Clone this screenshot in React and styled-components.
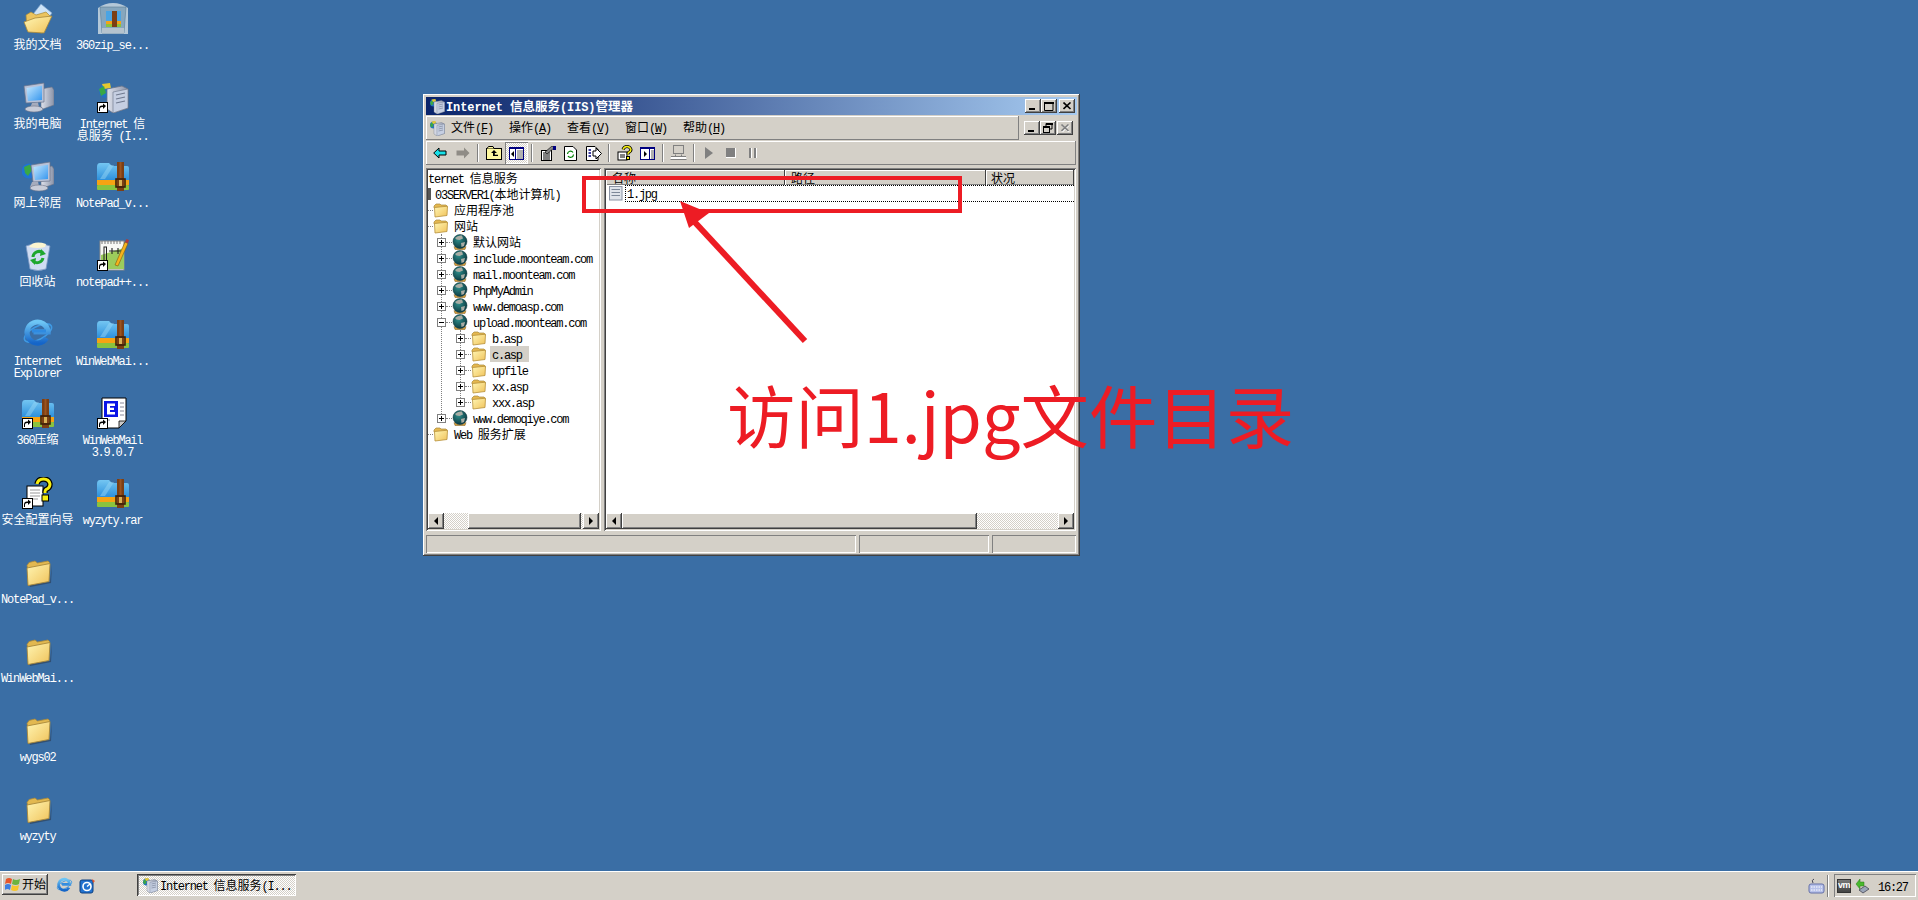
import React from 'react';
import styled, { createGlobalStyle } from 'styled-components';

const Global = createGlobalStyle`
  html, body { margin: 0; padding: 0; height: 100%; overflow: hidden; }
  body { font-family: "Noto Sans CJK SC", "Liberation Sans", sans-serif; font-size: 12px; color: #000; }
`;

const FACE = '#d4d0c8';
const dither = `repeating-conic-gradient(${FACE} 0 25%, #fff 0 50%) 0 0 / 2px 2px`;
const raised = `box-shadow: inset -1px -1px #404040, inset 1px 1px #fff, inset -2px -2px #808080, inset 2px 2px ${FACE};`;
const sunken = `box-shadow: inset 1px 1px #808080, inset -1px -1px #fff, inset 2px 2px #404040, inset -2px -2px ${FACE};`;

const Page = styled.div`display: flex; flex-direction: column; width: 100%; height: 100vh; background: #3a6ea5; overflow: hidden;`;
const Desktop = styled.main`position: relative; flex: 1; min-height: 0;`;
const IconGrid = styled.div`
  display: grid; grid-auto-flow: column;
  grid-template-columns: 75px 75px; grid-template-rows: repeat(11, 79.1px); width: 150px;
`;
const DeskItem = styled.div`display: flex; flex-direction: column; align-items: center; padding-top: 2px; color: #fff; text-align: center;`;
const DeskIconBox = styled.div`position: relative; width: 32px; height: 32px; margin-bottom: 4px;`;
const DeskLabel = styled.div`width: 75px; white-space: pre-line; line-height: 12px;`;
const Shortcut = styled.svg`position: absolute; left: 0; bottom: 0; width: 11px; height: 11px;`;

const Lat = styled.span`font-family: "Liberation Mono", monospace; font-size: 12px; line-height: 0; letter-spacing: ${p => p.$sp ?? '-1.25px'};`;
const Cjk = styled.span`font-family: "Noto Sans CJK SC", sans-serif; font-size: 12px; line-height: 0;`;
const T = ({ children, sp }) => (
  <>
    {String(children).split(/([\u4e00-\u9fff]+)/).filter(Boolean).map((s, i) =>
      /[\u4e00-\u9fff]/.test(s) ? <Cjk key={i}>{s}</Cjk> : <Lat key={i} $sp={sp}>{s}</Lat>)}
  </>
);

const Win = styled.section`
  position: absolute; left: 423px; top: 94px; width: 657px; height: 462px; box-sizing: border-box;
  background: ${FACE}; padding: 3px; display: flex; flex-direction: column; ${raised}
`;
const TitleBar = styled.header`
  height: 18px; flex: none; display: flex; align-items: center; padding: 0 2px 0 3px;
  background: linear-gradient(90deg, #0a246a, #a6caf0);
`;
const TitleText = styled.div`flex: 1; margin-left: 1px; color: #fff; font-weight: 700; white-space: nowrap; line-height: 18px;`;
const TitleLat = styled.span`font-family: "Liberation Mono", monospace; font-size: 12px; line-height: 0; font-weight: 700; letter-spacing: -0.1px;`;
const TitleCjk = styled.span`font-size: 12.5px; line-height: 0; font-weight: 700;`;
const WinBtn = styled.button`
  width: 16px; height: 14px; padding: 0; border: 0; background: ${FACE}; margin-left: ${p => p.$gap || 0}px;
  display: flex; align-items: center; justify-content: center; box-shadow: inset -1px -1px #404040, inset 1px 1px #fff, inset -2px -2px #808080;
`;
const MenuRow = styled.div`display: flex; height: 24px; margin-top: 1px; flex: none;`;
const MenuBand = styled.nav`
  width: 593px; height: 24px; box-sizing: border-box; display: flex; align-items: center; padding: 0 0 2px 3px;
  box-shadow: inset -1px -1px #808080, inset 1px 1px #fff, inset 0 -1px #808080;
`;
const MenuIcon = styled.div`width: 16px; height: 16px; margin: 2px 6px 0 0;`;
const MenuItem = styled.div`width: 58px; white-space: nowrap; line-height: 16px;`;
const ChildBtns = styled.div`display: flex; align-items: center; padding: 0 0 0 5px;`;
const Toolbar = styled.div`
  height: 24px; margin: 1px 1px 0 0; flex: none; display: flex; align-items: center; padding-left: 2px; box-sizing: border-box;
  box-shadow: inset -1px -1px #808080, inset 1px 1px #fff;
`;
const ToolBtn = styled.div`
  width: ${p => p.$w || 23}px; height: 22px; display: flex; align-items: center; justify-content: center; flex: none;
  ${p => p.$pressed && `background: ${dither}; box-shadow: inset 1px 1px #808080, inset -1px -1px #fff;`}
`;
const ToolSep = styled.div`width: 2px; height: 18px; margin: 0 3px; background: linear-gradient(90deg, #808080 50%, #fff 50%); flex: none;`;

const Panes = styled.div`display: flex; height: 363px; margin-top: 3px; flex: none; gap: 3px;`;
const Pane = styled.div`
  width: ${p => p.$w}px; box-sizing: border-box; padding: 2px; background: #fff; display: flex; flex-direction: column; ${sunken}
`;
const Tree = styled.div`flex: 1; min-height: 0; overflow: hidden; background: #fff; white-space: nowrap;`;
const Branch = styled.div`
  position: relative;
  &::before {
    content: ''; position: absolute; left: ${p => p.$x}px; top: 0; bottom: 8px; border-left: 1px dotted #808080;
  }
`;
const Row = styled.div`position: relative; display: flex; align-items: center; height: 16px; padding-left: ${p => p.$pad || 0}px;`;
const Expander = styled.div`
  position: relative; width: 9px; height: 9px; box-sizing: border-box; border: 1px solid #808080; background: #fff; flex: none;
  &::before { content: ''; position: absolute; left: 1px; right: 1px; top: 3px; height: 1px; background: #000; }
  &::after { content: ''; display: ${p => p.$open ? 'none' : 'block'}; position: absolute; top: 1px; bottom: 1px; left: 3px; width: 1px; background: #000; }
`;
const Conn = styled.div`width: ${p => p.$w}px; flex: none; border-top: 1px dotted #808080;`;
const Node = styled.div`width: 16px; height: 16px; flex: none; margin-right: 5px;`;
const Name = styled.div`height: 16px; line-height: 15px; padding-right: 3px; ${p => p.$sel && `background: ${FACE}; margin-left: -2px; padding: 0 7px 0 2px;`}`;
const Sliver = styled.div`width: 3px; height: 12px; background: #555; margin-right: 4px;`;

const HScroll = styled.div`display: flex; height: 16px; flex: none; background: ${dither};`;
const ScrollBtn = styled.div`
  width: 16px; height: 16px; flex: none; background: ${FACE}; display: flex; align-items: center; justify-content: center;
  box-shadow: inset -1px -1px #404040, inset 1px 1px #fff, inset -2px -2px #808080;
`;
const Thumb = styled.div`
  width: ${p => p.$w}px; margin-left: ${p => p.$lead}px; height: 16px; background: ${FACE};
  box-shadow: inset -1px -1px #404040, inset 1px 1px #fff, inset -2px -2px #808080;
`;
const Spacer = styled.div`flex: 1;`;
const Arrow = styled.div`
  width: 0; height: 0; border-top: 4px solid transparent; border-bottom: 4px solid transparent;
  ${p => p.$dir === 'l' ? 'border-right: 4px solid #000;' : 'border-left: 4px solid #000;'}
`;

const ListArea = styled.div`flex: 1; min-height: 0; background: #fff;`;
const ListHead = styled.div`display: flex; height: 16px;`;
const HeadCell = styled.div`
  width: ${p => p.$w}px; flex: ${p => p.$w ? 'none' : 1}; box-sizing: border-box; height: 15px; line-height: 15px; padding-left: ${p => p.$pl}px;
  background: ${FACE}; box-shadow: inset -1px 0 #404040, inset 0 1px #fff, inset 1px 0 #fff, inset 0 -1px #808080;
`;
const ListRow = styled.div`display: flex; align-items: stretch; height: 17px; padding-left: 3px; margin-top: -1px;`;
const FileIcon = styled.div`width: 14px; height: 16px; margin-right: 2px; flex: none;`;
const FileName = styled.div`flex: 1; box-sizing: border-box; border: 1px dotted #000; border-right: 0; padding-left: 1px; line-height: 14px;`;

const StatusBar = styled.footer`display: flex; gap: 3px; margin-top: 4px; height: 18px; padding-right: 1px; flex: none;`;
const StatusCell = styled.div`width: ${p => p.$w}px; box-shadow: inset 1px 1px #808080, inset -1px -1px #fff;`;

const RedBox = styled.div`position: absolute; left: 582px; top: 176px; width: 380px; height: 37px; box-sizing: border-box; border: 4px solid #ed1c24;`;
const ArrowSvg = styled.svg`position: absolute; left: 670px; top: 190px; width: 150px; height: 160px; pointer-events: none;`;
const Note = styled.div`
  position: absolute; left: 727px; top: 367px; color: #ed1c24; font-size: 68.4px; line-height: 94px; white-space: nowrap;
  font-family: "Noto Sans CJK SC", sans-serif; font-weight: 400;
`;

const Taskbar = styled.footer`
  height: 29px; flex: none; display: flex; align-items: flex-start; background: ${FACE}; box-shadow: inset 0 1px #fff; padding: 3px 2px 0 2px; box-sizing: border-box;
`;
const StartBtn = styled.button`
  width: 46px; height: 21px; border: 0; padding: 0 0 2px 3px; background: ${FACE}; display: flex; align-items: center; gap: 1px; font: inherit; color: #000; line-height: 17px;
  box-shadow: inset -1px -1px #404040, inset 1px 1px #fff, inset -2px -2px #808080;
`;
const Quick = styled.div`display: flex; align-items: center; gap: 6px; margin: 3px 0 0 8px; width: 81px;`;
const TaskBtn = styled.div`
  width: 159px; height: 22px; box-sizing: border-box; display: flex; align-items: center; gap: 2px; padding-left: 5px; background: ${dither}; white-space: nowrap; line-height: 16px;
  box-shadow: inset 1px 1px #404040, inset -1px -1px #fff, inset 2px 2px #808080;
`;
const TrayWrap = styled.div`margin-left: auto; display: flex; align-items: center; line-height: 16px;`;
const TraySep = styled.div`width: 2px; height: 22px; margin: 0 5px 0 2px; background: linear-gradient(90deg, #808080 50%, #fff 50%);`;
const Tray = styled.div`
  width: 82px; height: 23px; box-sizing: border-box; display: flex; align-items: center; padding-left: 3px; gap: 4px;
  box-shadow: inset 1px 1px #808080, inset -1px -1px #fff;
`;
const Clock = styled.div`margin-left: 5px;`;
const VmBadge = styled.div`
  width: 14px; height: 14px; background: linear-gradient(#777, #444); color: #fff; border: 1px solid #333; box-sizing: border-box;
  display: flex; align-items: center; justify-content: center; font: 700 9px/1 "Liberation Sans", sans-serif; letter-spacing: -0.5px;
`;
const DefsSvg = styled.svg`position: absolute; width: 0; height: 0;`;

/* ---------- drawn icons ---------- */
const Defs = () => (
  <DefsSvg aria-hidden="true">
    <defs>
      <linearGradient id="fold" x1="0" y1="0" x2="1" y2="1"><stop offset="0" stopColor="#fff6b4" /><stop offset="1" stopColor="#f0c25a" /></linearGradient>
      <linearGradient id="zipb" x1="0" y1="0" x2="0" y2="1"><stop offset="0" stopColor="#74c6f2" /><stop offset="1" stopColor="#2d90dc" /></linearGradient>
      <linearGradient id="screen" x1="0" y1="0" x2="1" y2="1"><stop offset="0" stopColor="#c4e8ff" /><stop offset="1" stopColor="#3596ee" /></linearGradient>
      <linearGradient id="case" x1="0" y1="0" x2="1" y2="0"><stop offset="0" stopColor="#dfe2ec" /><stop offset="1" stopColor="#8a93a8" /></linearGradient>
      <radialGradient id="glb" cx="0.4" cy="0.35" r="0.7"><stop offset="0" stopColor="#2f8f8c" /><stop offset="1" stopColor="#0a363e" /></radialGradient>
      <linearGradient id="iee" x1="0" y1="0" x2="0" y2="1"><stop offset="0" stopColor="#6ec6f5" /><stop offset="1" stopColor="#1565c8" /></linearGradient>
    </defs>
  </DefsSvg>
);

const Sc = () => (
  <Shortcut viewBox="0 0 11 11">
    <rect x="0.5" y="0.5" width="10" height="10" fill="#fff" stroke="#000" />
    <path d="M3 9V6.5Q3 5 5 5H6V7L9 4 6 1.5V3.5H5Q2 3.5 2 6.5V9Z" fill="#000" />
  </Shortcut>
);
const Folder = ({ size = 32 }) => (
  <svg width={size} height={size} viewBox="0 0 32 32">
    <path d="M7 27.5L8 31 29 27 30 8 28 26Z" fill="#2c3a50" opacity=".6" />
    <path d="M5 9.5L7 6.5 13 5 15.5 7 26 5 27.5 6.5 27 10 6 14Z" fill="#e2b850" stroke="#a8883a" strokeWidth=".8" />
    <path d="M5 12L28 7.5 27 25.5 6 29.5Z" fill="url(#fold)" stroke="#a8883a" strokeWidth=".9" />
  </svg>
);
const SmallFolder = () => (
  <svg width="16" height="16" viewBox="0 0 16 16">
    <path d="M1 4L3 2H7L8 3H13L14 4V6H1Z" fill="#e5b850" stroke="#a8883a" strokeWidth=".7" />
    <path d="M1.5 5.5L14.5 4.2 14 13.5 2 15Z" fill="url(#fold)" stroke="#b8903a" strokeWidth=".8" />
  </svg>
);
const Globe = () => (
  <svg width="16" height="16" viewBox="0 0 16 16">
    <path d="M2 12.5Q8 16.5 14 12.5L13 15.5H3Z" fill="#d9a23c" stroke="#7a5a1c" strokeWidth=".5" />
    <circle cx="8" cy="7.5" r="7" fill="url(#glb)" stroke="#0c3338" strokeWidth=".5" />
    <path d="M3 4Q6 1 10 1.6L11 4.5 7.5 6 4.5 5.5ZM9 9L13 8 12 12 9.5 13Z" fill="#a9aca4" />
  </svg>
);
const Zip = () => (
  <svg width="32" height="32" viewBox="0 0 32 32">
    <path d="M0 7Q0 3 3 3H12L15 6H30Q32 6 32 8V20H0Z" fill="url(#zipb)" />
    <path d="M3 19L12 5H17L8 19Z" fill="#9bd9f7" opacity=".45" />
    <rect x="0" y="20" width="32" height="5" fill="#f6a313" />
    <rect x="0" y="25" width="32" height="5" rx="1" fill="#8ac33e" />
    <rect x="20" y="2" width="7" height="29" fill="#7c3f14" />
    <rect x="22.5" y="2" width="2" height="18" fill="#9a5520" />
    <rect x="19" y="19" width="9" height="8" fill="none" stroke="#3d2008" strokeWidth="1.6" />
    <rect x="22" y="20" width="3" height="6" fill="#d8b258" />
  </svg>
);
const Zip360 = () => (
  <svg width="32" height="32" viewBox="0 0 32 32">
    <path d="M1 6Q8 1 16 1T31 6V32H1Z" fill="#b4c8d8" />
    <path d="M3 5H29L27 31H5Z" fill="#86a6bd" stroke="#5c7d96" strokeWidth=".6" />
    <rect x="9" y="9" width="15" height="16" fill="#4aa4e4" />
    <rect x="9" y="19" width="15" height="3" fill="#f4a21a" />
    <rect x="9" y="22" width="15" height="3" fill="#8ac33e" />
    <rect x="15" y="9" width="5" height="16" fill="#7c3f14" />
    <rect x="5" y="26" width="22" height="5" fill="#b5c3ce" />
  </svg>
);
const Docs = () => (
  <svg width="32" height="32" viewBox="0 0 32 32">
    <path d="M8 16L19 2 30 11 22 22Z" fill="#cde3f7" stroke="#7aa0c8" strokeWidth=".7" />
    <path d="M4 13L9 10 14 13 24 10 28 14 20 31 5 28Z" fill="#ecc45e" stroke="#a88a38" strokeWidth=".7" />
    <path d="M2 20L13 16 30 14 22 31 6 30Z" fill="url(#fold)" stroke="#a8883a" strokeWidth=".8" />
  </svg>
);
const Computer = ({ net }) => (
  <svg width="32" height="32" viewBox="0 0 32 32">
    {net && <><circle cx="7" cy="11" r="7.5" fill="#1f74d4" /><path d="M2 7L8 4.5 10 10 6 16 3 13Z" fill="#3aa845" /></>}
    <path d="M19 8L30 6 32 9V24L21 28 19 26Z" fill="url(#case)" stroke="#6a7388" strokeWidth=".6" />
    <path d={net ? 'M9 5L28 2V21L11 22Z' : 'M2 5L22 2V21L4 22Z'} fill="#b8c2d8" stroke="#6a7388" strokeWidth=".7" />
    <path d={net ? 'M11.5 7L26 4.7V19L13 20Z' : 'M4.5 7L20 4.7V19L6 20Z'} fill="url(#screen)" />
    <path d="M10 22L16 21.5 17 26 8 27Z" fill="#a6acbd" />
    <ellipse cx={net ? 17 : 12} cy="28" rx="9" ry="3" fill="#c8ccd8" stroke="#70768a" strokeWidth=".6" />
  </svg>
);
const Server = ({ size = 32 }) => (
  <svg width={size} height={size} viewBox="0 0 32 32">
    <circle cx="9" cy="10" r="7" fill="#2273c4" />
    <path d="M5 3L13 2 14 7 7 8Z" fill="#e7c830" />
    <path d="M2 8L7 5 9 12 4 15Z" fill="#3aa845" />
    <path d="M10 8L25 5 31 8V27L16 32 10 28Z" fill="url(#case)" stroke="#6a7488" strokeWidth=".8" />
    <path d="M16 11L31 8V27L16 32Z" fill="#c6cfe2" stroke="#6a7488" strokeWidth=".6" />
    <path d="M19 14L28 12M19 18L28 16M19 22L28 20" stroke="#707a90" strokeWidth="1.2" />
  </svg>
);
const Recycle = () => (
  <svg width="32" height="32" viewBox="0 0 32 32">
    <path d="M4 7Q16 2 28 7L24 30Q16 33 8 30Z" fill="#cfdcf2" stroke="#7c98c2" strokeWidth=".8" />
    <path d="M7 8Q12 1 24 5L23 8Q16 10 7 8Z" fill="#fbf5d0" />
    <path d="M11 18A6 6 0 0 1 21 14M21 19A6 6 0 0 1 11 22" fill="none" stroke="#1ea72e" strokeWidth="3" />
    <path d="M19 10L24 15 18 17ZM13 26L8 21 14 19Z" fill="#1ea72e" />
  </svg>
);
const NotepadPP = () => (
  <svg width="32" height="32" viewBox="0 0 32 32">
    <rect x="3" y="2" width="24" height="29" fill="#f8f8f4" stroke="#8c8c8c" />
    <path d="M5 2V5M8 2V5M11 2V5M14 2V5M17 2V5M20 2V5M23 2V5" stroke="#777" />
    <path d="M4 16L27 9V30H4Z" fill="#9ccc5c" />
    <rect x="7" y="8" width="2.5" height="15" fill="none" stroke="#222" />
    <path d="M12 12H18M15 9V15M18 12H24M21 9V15" stroke="#222" strokeWidth="1.1" />
    <path d="M18 26L28 3 31 4.5 21 27Z" fill="#f6b21c" stroke="#7a5a10" strokeWidth=".6" />
    <path d="M28 3L31 4.5 32 1 29.5 0Z" fill="#b03a3a" />
  </svg>
);
const IE = ({ size = 32 }) => (
  <svg width={size} height={size} viewBox="0 0 32 32">
    <ellipse cx="16" cy="15" rx="15" ry="6.5" transform="rotate(-28 16 15)" fill="none" stroke="#3f9ae4" strokeWidth="1.6" />
    <path d="M24.5 20A10.5 10.5 0 1 1 26 14H11.5" fill="none" stroke="url(#iee)" strokeWidth="5.2" />
    <path d="M10 13H24" stroke="#2f8ae0" strokeWidth="3" />
  </svg>
);
const WWM = () => (
  <svg width="32" height="32" viewBox="0 0 32 32">
    <path d="M5 1H29V24L22 31H5Z" fill="#fff" stroke="#000" />
    <path d="M22 31V24H29Z" fill="#c8c8c8" stroke="#000" strokeWidth=".8" />
    <rect x="7" y="4" width="14" height="16" fill="#0a14e6" />
    <path d="M10 6.5H18V9H13V10.8H17V13H13V15H18V17.5H10Z" fill="#fff" />
    <path d="M23 6H27M23 10H27M23 14H27M23 18H27M9 23H13" stroke="#889" />
  </svg>
);
const Help = ({ size = 32 }) => (
  <svg width={size} height={size} viewBox="0 0 32 32">
    <rect x="5" y="9" width="16" height="20" fill="#fff" stroke="#000" />
    <path d="M8 13H18M8 16H18M8 19H18M8 22H16" stroke="#999" />
    <path d="M15 7Q16 2 21.5 2T28 7Q28 11 24 12.5Q23 13 23 16" fill="none" stroke="#000" strokeWidth="5.4" />
    <path d="M15 7Q16 2 21.5 2T28 7Q28 11 24 12.5Q23 13 23 16" fill="none" stroke="#f6ee10" strokeWidth="3" />
    <rect x="20" y="18" width="6.5" height="6" fill="#f6ee10" stroke="#000" />
  </svg>
);
const TinyHelp = () => (
  <svg width="16" height="16" viewBox="0 0 16 16">
    <rect x="1" y="7" width="9" height="8" fill="#fff" stroke="#000" />
    <path d="M3 10H8M3 12H8" stroke="#000" />
    <path d="M6 4.5Q7 1.5 10 1.5T14 4.5Q14 6.5 11.5 7.5Q11 8 11 9.5" fill="none" stroke="#000" strokeWidth="3" />
    <path d="M6 4.5Q7 1.5 10 1.5T14 4.5Q14 6.5 11.5 7.5Q11 8 11 9.5" fill="none" stroke="#f6ee10" strokeWidth="1.4" />
    <rect x="9.5" y="11.5" width="3" height="3" fill="#f6ee10" stroke="#000" />
  </svg>
);
const BackIcon = () => (
  <svg width="14" height="12" viewBox="0 0 14 12"><path d="M.7 6L6 1V4H13V8H6V11Z" fill="#18e0e8" stroke="#000" /></svg>
);
const ForwardIcon = () => (
  <svg width="14" height="12" viewBox="0 0 14 12"><path d="M13.5 6L8 .5V3.5H.5V8.5H8V11.5Z" fill="#8f8c86" /></svg>
);
const UpFolder = () => (
  <svg width="16" height="14" viewBox="0 0 16 14">
    <rect x=".5" y="2.5" width="15" height="11" fill="#fff9a0" stroke="#000" />
    <path d="M1 2.5L2.5 .5H7L8 2.5" fill="#fff9a0" stroke="#000" />
    <path d="M8 4L5 7H7V10H12V8.8H8.8V7H11Z" fill="#000" />
  </svg>
);
const TreeIcon = () => (
  <svg width="15" height="13" viewBox="0 0 15 13">
    <rect x=".5" y=".5" width="14" height="12" fill="#fff" stroke="#000080" strokeWidth="1" />
    <rect x="0" y="0" width="15" height="2" fill="#000080" />
    <rect x="6" y="2" width="1" height="10" fill="#000080" />
    <path d="M5 4V10L2 7Z" fill="#000" /><rect x="8" y="3" width="6" height="9" fill="#b0b0b0" />
  </svg>
);
const PropIcon = () => (
  <svg width="16" height="15" viewBox="0 0 16 15">
    <rect x="1.5" y="4.5" width="10" height="10" fill="#fff" stroke="#000" />
    <path d="M3 7H10M3 9H10M3 11H10M3 13H10" stroke="#000" />
    <path d="M5 6L12 0 14 2 7 8Z" fill="#888" stroke="#000" strokeWidth=".6" />
    <rect x="13" y="0" width="3" height="4" fill="#000080" />
  </svg>
);
const RefreshIcon = () => (
  <svg width="13" height="15" viewBox="0 0 13 15">
    <path d="M.5 .5H9L12.5 4V14.5H.5Z" fill="#fff" stroke="#000" />
    <path d="M3.5 8A3 3 0 0 1 9 6.5M9.5 8.5A3 3 0 0 1 4 10" fill="none" stroke="#008000" strokeWidth="1.2" />
  </svg>
);
const ExportIcon = () => (
  <svg width="16" height="15" viewBox="0 0 16 15">
    <path d="M.5 .5H9L12 3.5V14.5H.5Z" fill="#fff" stroke="#000" />
    <path d="M2.5 4H5M2.5 7H5M2.5 10H5" stroke="#000080" strokeWidth="1.4" />
    <path d="M7 5V10H10V13L15.5 7.5 10 2V5Z" fill="#fff" stroke="#000" />
  </svg>
);
const ActionIcon = () => (
  <svg width="15" height="13" viewBox="0 0 15 13">
    <rect x=".5" y=".5" width="14" height="12" fill="#fff" stroke="#000080" />
    <rect x="0" y="0" width="15" height="2" fill="#000080" />
    <rect x="9" y="2" width="1" height="10" fill="#000080" />
    <path d="M4 4V10L7 7Z" fill="#000" /><rect x="11" y="3" width="3" height="9" fill="#b0b0b0" />
  </svg>
);
const GrayPC = () => (
  <svg width="17" height="16" viewBox="0 0 17 16">
    <rect x="3.5" y=".5" width="10" height="8" fill="none" stroke="#808080" />
    <path d="M5.5 9.5V11M11.5 9.5V11M1 11.5H16M.5 14.5H16.5" stroke="#808080" />
    <path d="M1 12H16L16.5 14H.5Z" fill="#fff" />
  </svg>
);
const Play = () => <svg width="8" height="12" viewBox="0 0 8 12"><path d="M0 0L8 6 0 12Z" fill="#808080" /></svg>;
const Stop = () => <svg width="10" height="10" viewBox="0 0 10 10"><rect width="9" height="9" fill="#808080" /><path d="M9 0V9H0V10H10V0Z" fill="#fff" /></svg>;
const Pause = () => <svg width="8" height="10" viewBox="0 0 8 10"><path d="M0 0H2V10H0ZM5 0H7V10H5Z" fill="#808080" /><path d="M2 0H3V10H2ZM7 0H8V10H7Z" fill="#fff" /></svg>;
const Min = ({ c = '#000' }) => <svg width="8" height="8" viewBox="0 0 8 8"><rect x="0" y="6" width="6" height="2" fill={c} /></svg>;
const Max = () => <svg width="10" height="9" viewBox="0 0 10 9"><path d="M.5 1.5H9V8.5H.5Z" fill="none" stroke="#000" /><rect y="0" width="10" height="2" /></svg>;
const Restore = () => <svg width="10" height="10" viewBox="0 0 10 10"><path d="M3 .5H9V6H7M3 .5V3" fill="none" stroke="#000" /><rect x="3" y="0" width="7" height="2" /><rect x=".5" y="3.5" width="6" height="6" fill={FACE} stroke="#000" /><rect y="3" width="7" height="2" /></svg>;
const Close = ({ c = '#000', hi }) => (
  <svg width="9" height="8" viewBox="0 0 9 8">
    {hi && <path d="M1 1L8 8M8 1L1 8" stroke="#fff" strokeWidth="1.6" />}
    <path d="M.5 .5L7.5 7M7.5 .5L.5 7" stroke={c} strokeWidth="1.6" />
  </svg>
);
const FileGlyph = () => (
  <svg width="14" height="16" viewBox="0 0 14 16">
    <rect x=".5" y="1.5" width="12.5" height="13.5" fill="#dfe3ea" stroke="#8b94a5" />
    <path d="M2.5 4.5H11M2.5 7.5H11M2.5 10.5H11" stroke="#7c8798" />
  </svg>
);
const Flag = () => (
  <svg width="16" height="16" viewBox="0 0 16 16">
    <path d="M1 3Q4 1 7 3L6 8Q3 6 0 8Z" fill="#e8562a" />
    <path d="M8 3Q11 5 15 3L14 8Q11 10 7 8Z" fill="#6cb33f" />
    <path d="M0 9Q3 7 6 9L5 14Q2 12 0 14Z" fill="#3f7fe0" />
    <path d="M7 9Q10 11 14 9L13 14Q10 16 6 14Z" fill="#f7c52b" />
  </svg>
);
const DesktopShow = () => (
  <svg width="16" height="16" viewBox="0 0 16 16">
    <rect x="1" y="2" width="13" height="13" rx="2" fill="#2272cf" stroke="#0c3f80" />
    <circle cx="8" cy="8.5" r="4" fill="none" stroke="#fff" strokeWidth="1.6" />
    <path d="M8 8.5L11 6" stroke="#fff" strokeWidth="1.4" />
    <path d="M13 1L16 3 14 5Z" fill="#e8562a" />
  </svg>
);
const Kbd = () => (
  <svg width="17" height="16" viewBox="0 0 17 16">
    <path d="M5 5Q3 2 6 1" fill="none" stroke="#445" />
    <rect x="1" y="6" width="15" height="9" rx="2" fill="#b8c2ea" stroke="#6570a8" />
    <path d="M3 9H14M3 12H14" stroke="#fff" strokeDasharray="1.5 1" />
  </svg>
);
const NetTray = () => (
  <svg width="14" height="16" viewBox="0 0 14 16">
    <path d="M1 6L5 1V4H9V8H5V11Z" fill="#49b82e" stroke="#2a7a18" strokeWidth=".5" />
    <path d="M4 12L10 8 14 11 8 15Z" fill="#9aa5b8" stroke="#334" strokeWidth=".7" />
  </svg>
);

const Arw = ({ dir }) => <ScrollBtn><Arrow $dir={dir} /></ScrollBtn>;

const deskItems = [
  [<Docs />, '我的文档'], [<Computer />, '我的电脑'], [<Computer net />, '网上邻居'], [<Recycle />, '回收站'],
  [<IE />, 'Internet\nExplorer'], [<Zip />, '360压缩', 1], [<Help />, '安全配置向导', 1],
  [<Folder />, 'NotePad_v...'], [<Folder />, 'WinWebMai...'], [<Folder />, 'wygs02'], [<Folder />, 'wyzyty'],
  [<Zip360 />, '360zip_se...'], [<Server />, 'Internet 信\n息服务 (I...', 1], [<Zip />, 'NotePad_v...'],
  [<NotepadPP />, 'notepad++...', 1], [<Zip />, 'WinWebMai...'], [<WWM />, 'WinWebMail\n3.9.0.7', 1], [<Zip />, 'wyzyty.rar'],
];
const sitesA = ['默认网站', 'include.moonteam.com', 'mail.moonteam.com', 'PhpMyAdmin', 'www.demoasp.com'];
const kids = ['b.asp', 'c.asp', 'upfile', 'xx.asp', 'xxx.asp'];
const menus = [['文件', 'F'], ['操作', 'A'], ['查看', 'V'], ['窗口', 'W'], ['帮助', 'H']];

const Site = ({ name, open }) => (
  <Row $pad={9}>
    <Expander $open={open} /><Conn $w={6} /><Node><Globe /></Node><Name><T>{name}</T></Name>
  </Row>
);
const Top = ({ name }) => (
  <Row><Conn $w={5} /><Node><SmallFolder /></Node><Name><T>{name}</T></Name></Row>
);

export default function App() {
  return (
    <Page>
      <Global />
      <Defs />
      <Desktop>
        <IconGrid>
          {deskItems.map(([icon, label, sc], i) => (
            <DeskItem key={i}>
              <DeskIconBox>{icon}{sc ? <Sc /> : null}</DeskIconBox>
              <DeskLabel><T sp={/\.\.\.$/.test(label) && !/[\u4e00-\u9fff]/.test(label) ? '-1.1px' : undefined}>{label}</T></DeskLabel>
            </DeskItem>
          ))}
        </IconGrid>

        <Win>
          <TitleBar>
            <Server size={16} />
            <TitleText>
              <TitleLat>Internet </TitleLat><TitleCjk>信息服务</TitleCjk><TitleLat>(IIS)</TitleLat><TitleCjk>管理器</TitleCjk>
            </TitleText>
            <WinBtn><Min /></WinBtn>
            <WinBtn><Max /></WinBtn>
            <WinBtn $gap={2}><Close /></WinBtn>
          </TitleBar>
          <MenuRow>
            <MenuBand>
              <MenuIcon><Server size={16} /></MenuIcon>
              {menus.map(([a, k]) => (
                <MenuItem key={k}><Cjk>{a}</Cjk><Lat>(<u>{k}</u>)</Lat></MenuItem>
              ))}
            </MenuBand>
            <ChildBtns>
              <WinBtn><Min /></WinBtn>
              <WinBtn><Restore /></WinBtn>
              <WinBtn $gap={1}><Close c="#808080" hi /></WinBtn>
            </ChildBtns>
          </MenuRow>
          <Toolbar>
            <ToolBtn><BackIcon /></ToolBtn>
            <ToolBtn><ForwardIcon /></ToolBtn>
            <ToolSep />
            <ToolBtn><UpFolder /></ToolBtn>
            <ToolBtn $pressed><TreeIcon /></ToolBtn>
            <ToolSep />
            <ToolBtn><PropIcon /></ToolBtn>
            <ToolBtn><RefreshIcon /></ToolBtn>
            <ToolBtn><ExportIcon /></ToolBtn>
            <ToolSep />
            <ToolBtn><TinyHelp /></ToolBtn>
            <ToolBtn><ActionIcon /></ToolBtn>
            <ToolSep />
            <ToolBtn><GrayPC /></ToolBtn>
            <ToolSep />
            <ToolBtn $w={22}><Play /></ToolBtn>
            <ToolBtn $w={22}><Stop /></ToolBtn>
            <ToolBtn $w={22}><Pause /></ToolBtn>
          </Toolbar>
          <Panes>
            <Pane $w={175}>
              <Tree>
                <Row><Name><T>ternet 信息服务</T></Name></Row>
                <Row><Sliver /><Name><T>03SERVER1(本地计算机)</T></Name></Row>
                <Top name="应用程序池" />
                <Top name="网站" />
                <Branch $x={13}>
                  {sitesA.map(s => <Site key={s} name={s} />)}
                  <Site name="upload.moonteam.com" open />
                  <Branch $x={32}>
                    {kids.map(k => (
                      <Row key={k} $pad={28}>
                        <Expander /><Conn $w={6} /><Node><SmallFolder /></Node>
                        <Name $sel={k === 'c.asp'}><T>{k}</T></Name>
                      </Row>
                    ))}
                  </Branch>
                  <Site name="www.demoqiye.com" />
                </Branch>
                <Top name="Web 服务扩展" />
              </Tree>
              <HScroll>
                <Arw dir="l" /><Thumb $lead={24} $w={113} /><Spacer /><Arw dir="r" />
              </HScroll>
            </Pane>
            <Pane $w={472}>
              <ListArea>
                <ListHead>
                  <HeadCell $w={179} $pl={6}><Cjk>名称</Cjk></HeadCell>
                  <HeadCell $w={201} $pl={6}><Cjk>路径</Cjk></HeadCell>
                  <HeadCell $pl={5}><Cjk>状况</Cjk></HeadCell>
                </ListHead>
                <ListRow>
                  <FileIcon><FileGlyph /></FileIcon>
                  <FileName><T>1.jpg</T></FileName>
                </ListRow>
              </ListArea>
              <HScroll>
                <Arw dir="l" /><Thumb $lead={0} $w={355} /><Spacer /><Arw dir="r" />
              </HScroll>
            </Pane>
          </Panes>
          <StatusBar>
            <StatusCell $w={430} />
            <StatusCell $w={130} />
            <StatusCell $w={84} />
          </StatusBar>
        </Win>

        <RedBox />
        <ArrowSvg viewBox="670 190 150 160">
          <path d="M690 217L805 341" stroke="#ed1c24" strokeWidth="6" fill="none" />
          <path d="M680 201L709 213 689 228Z" fill="#ed1c24" />
        </ArrowSvg>
        <Note>访问1.jpg文件目录</Note>
      </Desktop>

      <Taskbar>
        <StartBtn><Flag /><Cjk>开始</Cjk></StartBtn>
        <Quick><IE size={17} /><DesktopShow /></Quick>
        <TaskBtn><Server size={16} /><div><T>Internet 信息服务(I...</T></div></TaskBtn>
        <TrayWrap>
          <Kbd />
          <TraySep />
          <Tray>
            <VmBadge>vm</VmBadge>
            <NetTray />
            <Clock><T>16:27</T></Clock>
          </Tray>
        </TrayWrap>
      </Taskbar>
    </Page>
  );
}
